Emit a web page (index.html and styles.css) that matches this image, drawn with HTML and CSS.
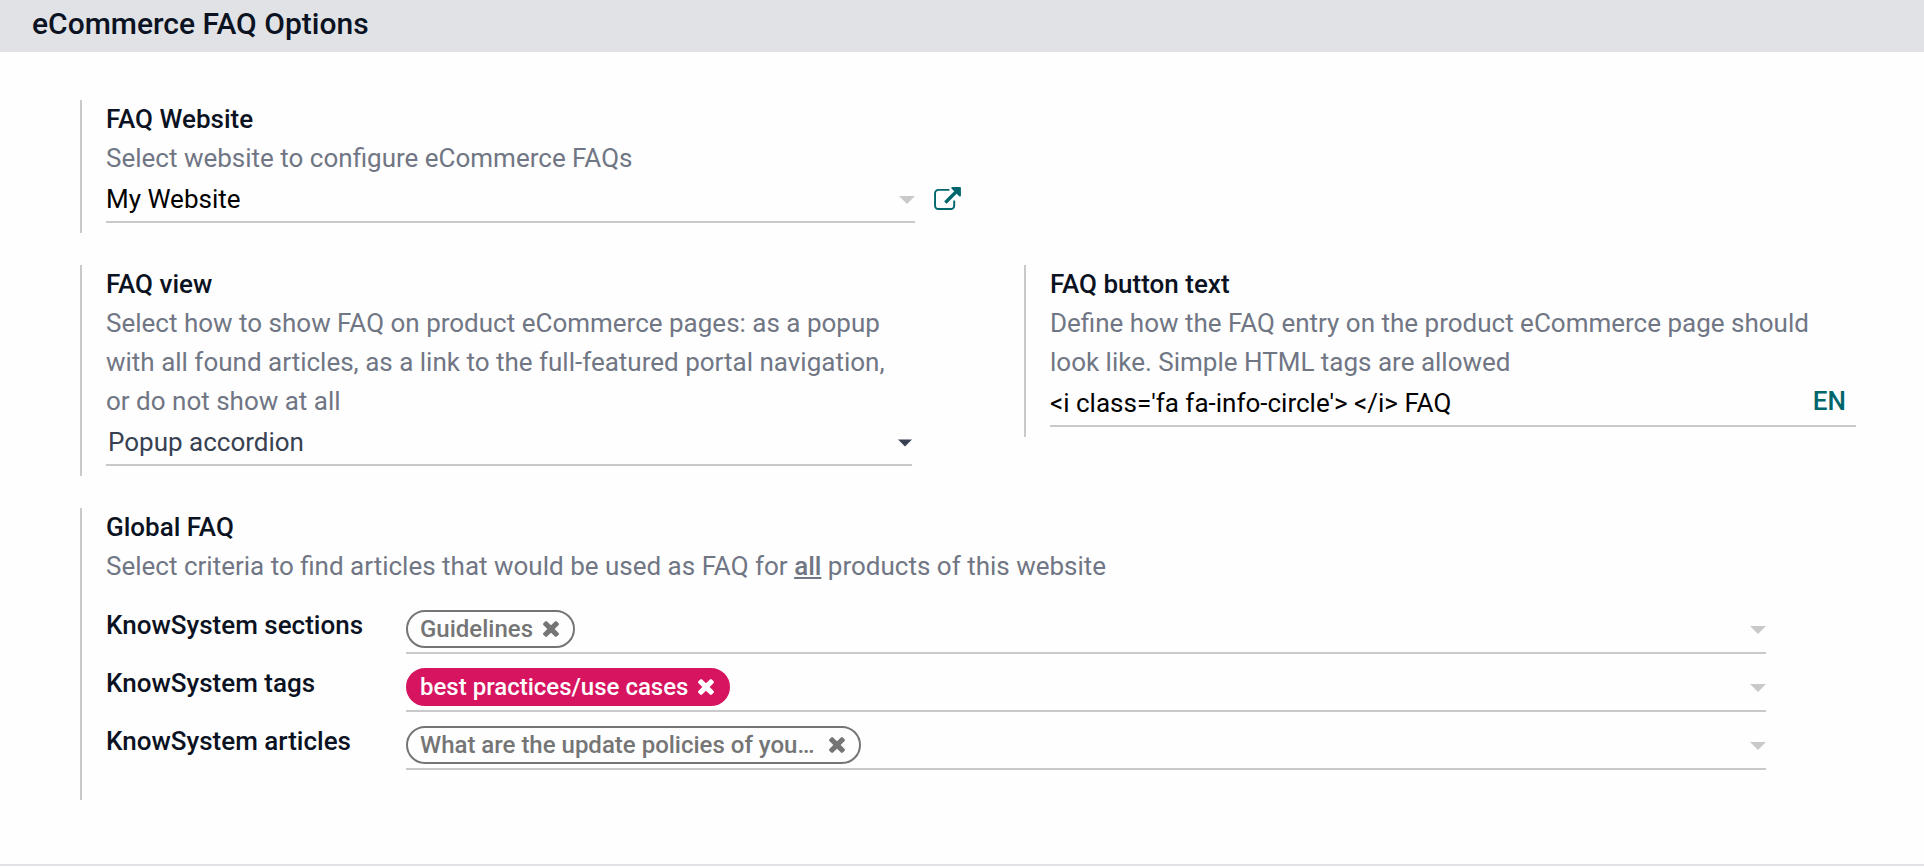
FILE: index.html
```html
<!DOCTYPE html>
<html lang="en">
<head>
  <meta charset="UTF-8">
  <meta name="viewport" content="width=device-width, initial-scale=1.0">
  <title>eCommerce FAQ Options</title>
  <link rel="stylesheet" href="styles.css">
</head>
<body>

  <!-- shared icons -->
  <svg class="sprite" aria-hidden="true">
    <symbol id="caret" viewBox="0 0 16 8">
      <path d="M0 0h16l-8 8z"/>
    </symbol>
    <symbol id="times" viewBox="110 366 1188 1188">
      <path d="M1298 1322q0 40-28 68l-136 136q-28 28-68 28t-68-28l-294-294-294 294q-28 28-68 28t-68-28l-136-136q-28-28-28-68t28-68l294-294-294-294q-28-28-28-68t28-68l136-136q28-28 68-28t68 28l294 294 294-294q28-28 68-28t68 28l136 136q28 28 28 68t-28 68l-294 294 294 294q28 28 28 68z"/>
    </symbol>
    <symbol id="external" viewBox="0 0 1792 1536">
      <path d="M1408 928v320q0 119-84.500 203.500t-203.500 84.500h-832q-119 0-203.500-84.500t-84.500-203.500v-832q0-119 84.500-203.500t203.500-84.500h704q14 0 23 9t9 23v64q0 14-9 23t-23 9h-704q-66 0-113 47t-47 113v832q0 66 47 113t113 47h832q66 0 113-47t47-113v-320q0-14 9-23t23-9h64q14 0 23 9t9 23zM1792 64v512q0 26-19 45t-45 19-45-19l-176-176-652 652q-10 10-23 10t-23-10l-114-114q-10-10-10-23t10-23l652-652-176-176q-19-19-19-45t19-45 45-19h512q26 0 45 19t19 45z"/>
    </symbol>
  </svg>

  <header>
    <h2>eCommerce FAQ Options</h2>
  </header>

  <main class="settings">
    <section class="setting wide">
      <label class="title" for="website">FAQ Website</label>
      <p class="help">Select website to configure eCommerce FAQs</p>
      <div class="website-row">
        <div class="field">
          <select id="website">
            <option>My Website</option>
          </select>
          <svg class="caret"><use href="#caret"/></svg>
        </div>
        <a class="external" href="#" aria-label="Open website">
          <svg><use href="#external"/></svg>
        </a>
      </div>
    </section>

    <section class="setting">
      <label class="title" for="view">FAQ view</label>
      <p class="help">Select how to show FAQ on product eCommerce pages: as a popup with all found articles, as a link to the full-featured portal navigation, or do not show at all</p>
      <div class="field selection">
        <select id="view">
          <option>Popup accordion</option>
          <option>Link to portal</option>
          <option>Do not show</option>
        </select>
        <svg class="caret"><use href="#caret"/></svg>
      </div>
    </section>

    <section class="setting">
      <label class="title" for="button-text">FAQ button text</label>
      <p class="help">Define how the FAQ entry on the product eCommerce page should look like. Simple HTML tags are allowed</p>
      <div class="field">
        <input type="text" id="button-text" value="&lt;i class='fa fa-info-circle'&gt; &lt;/i&gt; FAQ">
        <button class="lang" type="button">EN</button>
      </div>
    </section>

    <section class="setting wide global">
      <h3 class="title">Global FAQ</h3>
      <p class="help">Select criteria to find articles that would be used as FAQ for <b>all</b> products of this website</p>

      <div class="criteria">
        <label class="title" for="sections">KnowSystem sections</label>
        <div class="field tags">
          <span class="tag">Guidelines
            <button type="button" aria-label="Remove"><svg><use href="#times"/></svg></button>
          </span>
          <input type="text" id="sections">
          <svg class="caret"><use href="#caret"/></svg>
        </div>

        <label class="title" for="tags">KnowSystem tags</label>
        <div class="field tags">
          <span class="tag filled">best practices/use cases
            <button type="button" aria-label="Remove"><svg><use href="#times"/></svg></button>
          </span>
          <input type="text" id="tags">
          <svg class="caret"><use href="#caret"/></svg>
        </div>

        <label class="title" for="articles">KnowSystem articles</label>
        <div class="field tags">
          <span class="tag long">What are the update policies of you…
            <button type="button" aria-label="Remove"><svg><use href="#times"/></svg></button>
          </span>
          <input type="text" id="articles">
          <svg class="caret"><use href="#caret"/></svg>
        </div>
      </div>
    </section>
  </main>

</body>
</html>
```

FILE: styles.css
```css
* {
  box-sizing: border-box;
}

body {
  margin: 0;
  font-family: Roboto, sans-serif;
  font-size: 26px;
  line-height: 39px;
  color: #0b1222;
  background: #fefefe;
}

.sprite {
  display: none;
}

header {
  height: 52px;
  padding: 2px 32px;
  background: #e0e2e6;
}

h2 {
  margin: 0;
  font-size: 30px;
  line-height: 44px;
  font-weight: 500;
}

.settings {
  display: grid;
  grid-template-columns: 1fr 1fr;
  align-items: start;
  gap: 32px 112px;
  padding: 48px 68px 64px 80px;
  border-bottom: 2px solid #e0e2e6;
}

.setting {
  padding: 0 0 10px 24px;
  border-left: 2px solid #c9c9c9;
}

.wide {
  grid-column: 1 / -1;
}

.title {
  display: block;
  margin: 0;
  font-size: 26px;
  font-weight: 500;
}

.help {
  margin: 0;
  color: #707684;
}

.help b {
  font-weight: 500;
  text-decoration: underline;
}

/* fields */
.field {
  display: flex;
  align-items: center;
  height: 45px;
  border-bottom: 2px solid #c9c9c9;
}

.field select,
.field input {
  flex: 1;
  min-width: 0;
  height: 39px;
  padding: 0;
  border: 0;
  outline: 0;
  appearance: none;
  background: none;
  font: inherit;
  color: #000;
}

.caret {
  flex: none;
  width: 16px;
  height: 8px;
  fill: #c9c9c9;
}

.selection select {
  padding-left: 2px;
  color: #374151;
}

.selection .caret {
  width: 14px;
  fill: #374151;
}

.website-row {
  display: flex;
  align-items: center;
  gap: 19px;
}

.website-row .field {
  flex: 0 1 809px;
}

.external {
  padding-bottom: 4px;
}

.external svg {
  display: block;
  width: 27px;
  height: 23px;
  fill: #01666b;
}

.lang {
  padding: 0 10px 4px;
  border: 0;
  background: none;
  font: inherit;
  font-weight: 500;
  color: #01666b;
  cursor: pointer;
}

/* global criteria */
.global {
  padding-bottom: 30px;
}

.criteria {
  display: grid;
  grid-template-columns: 300px 1fr;
  row-gap: 10px;
  padding: 20px 90px 0 0;
}

.tags {
  height: 48px;
}

.tags .caret {
  margin-top: 2px;
}

.tag {
  display: flex;
  align-items: center;
  gap: 10px;
  height: 38px;
  margin-bottom: 1px;
  padding: 0 14px 0 12px;
  border: 2px solid #757575;
  border-radius: 19px;
  font-size: 24px;
  line-height: 34px;
  font-weight: 500;
  color: #757575;
}

.tag.filled {
  border-color: #d6145f;
  background: #d6145f;
  color: #fff;
}

.tag.long {
  gap: 15px;
}

.tag button {
  padding: 0;
  border: 0;
  background: none;
  color: inherit;
  cursor: pointer;
}

.tag svg {
  display: block;
  width: 16px;
  height: 16px;
  fill: currentColor;
}
```
